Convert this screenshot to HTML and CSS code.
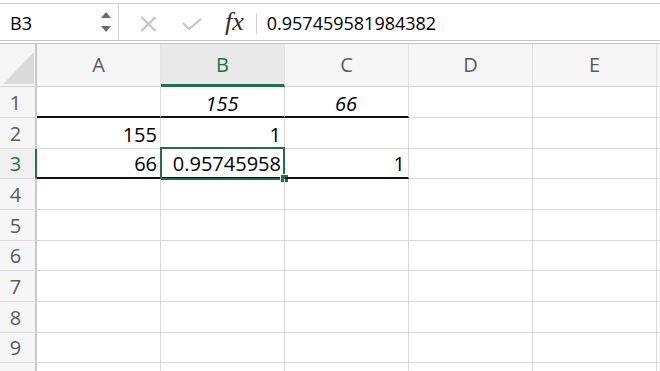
FILE: index.html
```html
<!DOCTYPE html>
<html>
<head>
<meta charset="utf-8">
<link rel="stylesheet" href="styles.css">
</head>
<body>
<div class="app">
  <div class="formula-bar">
    <div class="name-box">
      <span class="name">B3</span>
      <svg class="spinner" width="10" height="21" viewBox="0 0 10 21">
        <path d="M5 0 L10 6 L0 6 Z" fill="#6b6b6b"/>
        <path d="M0 14 L10 14 L5 20 Z" fill="#6b6b6b"/>
      </svg>
    </div>
    <svg class="cancel" width="17" height="16" viewBox="0 0 17 16">
      <path d="M1.5 1 L15.5 15 M15.5 1 L1.5 15" stroke="#c4c4c4" stroke-width="2.2" fill="none"/>
    </svg>
    <svg class="enter" width="20" height="12" viewBox="0 0 20 12">
      <path d="M1 5 L7 11 L19 1" stroke="#c4c4c4" stroke-width="2.2" fill="none"/>
    </svg>
    <span class="fx">fx</span>
    <div class="sep"></div>
    <div class="formula">0.957459581984382</div>
  </div>

  <div class="sheet">
    <div class="corner">
      <svg width="31" height="32" viewBox="0 0 31 32"><path d="M0 32 L31 0 L31 32 Z" fill="#dadada"/></svg>
    </div>
    <div class="ch">A</div>
    <div class="ch ch-sel">B</div>
    <div class="ch">C</div>
    <div class="ch">D</div>
    <div class="ch">E</div>
    <div class="ch ch-rest"></div>

    <div class="rh">1</div>
    <div class="c thick"></div>
    <div class="c thick center it">155</div>
    <div class="c thick center it">66</div>
    <div class="c"></div>
    <div class="c"></div>
    <div class="c rest"></div>

    <div class="rh">2</div>
    <div class="c">155</div>
    <div class="c">1</div>
    <div class="c"></div>
    <div class="c"></div>
    <div class="c"></div>
    <div class="c rest"></div>

    <div class="rh rh-sel">3</div>
    <div class="c thick">66</div>
    <div class="c thick sel">0.95745958<span class="sel-box"></span><span class="handle"></span></div>
    <div class="c thick">1</div>
    <div class="c"></div>
    <div class="c"></div>
    <div class="c rest"></div>

    <div class="rh">4</div><div class="c"></div><div class="c"></div><div class="c"></div><div class="c"></div><div class="c"></div><div class="c rest"></div>
    <div class="rh">5</div><div class="c"></div><div class="c"></div><div class="c"></div><div class="c"></div><div class="c"></div><div class="c rest"></div>
    <div class="rh">6</div><div class="c"></div><div class="c"></div><div class="c"></div><div class="c"></div><div class="c"></div><div class="c rest"></div>
    <div class="rh">7</div><div class="c"></div><div class="c"></div><div class="c"></div><div class="c"></div><div class="c"></div><div class="c rest"></div>
    <div class="rh">8</div><div class="c"></div><div class="c"></div><div class="c"></div><div class="c"></div><div class="c"></div><div class="c rest"></div>
    <div class="rh">9</div><div class="c"></div><div class="c"></div><div class="c"></div><div class="c"></div><div class="c"></div><div class="c rest"></div>
    <div class="rh"></div><div class="c"></div><div class="c"></div><div class="c"></div><div class="c"></div><div class="c"></div><div class="c rest"></div>
  </div>
</div>
</body>
</html>
```

FILE: styles.css
```css
html, body {
  margin: 0;
  padding: 0;
  background: #ffffff;
}
body {
  width: 660px;
  height: 371px;
  overflow: hidden;
  font-family: "Open Sans", "Liberation Sans", sans-serif;
  color: #000;
}
.app {
  padding-top: 3px;
}
.formula-bar {
  display: flex;
  align-items: center;
  border-top: 1px solid #cfcfcf;
  border-bottom: 1px solid #c4c4c4;
  box-sizing: border-box;
  height: 38px;
}
.name-box {
  width: 119px;
  height: 100%;
  box-sizing: border-box;
  border-right: 1px solid #cdcdcd;
  display: flex;
  align-items: center;
  justify-content: space-between;
  padding-left: 10px;
  padding-right: 7px;
}
.name {
  font-size: 18px;
  line-height: 24px;
  padding-top: 2px;
}
.spinner {
  display: block;
  margin-top: 1px;
}
.cancel {
  margin-left: 21px;
  margin-top: 3px;
  display: block;
}
.enter {
  margin-left: 25px;
  margin-top: 3px;
  display: block;
}
.fx {
  margin-left: 23px;
  font-family: "Liberation Serif", "DejaVu Serif", serif;
  font-style: italic;
  font-size: 26px;
  line-height: 26px;
  color: #2e2e2e;
  padding-bottom: 1px;
}
.sep {
  width: 1px;
  height: 21px;
  background: #d2d2d2;
  margin-left: 12px;
  margin-top: 2px;
}
.formula {
  margin-left: 10px;
  font-size: 18px;
  line-height: 24px;
  padding-top: 2px;
}

.sheet {
  margin-top: 2px;
  border-top: 1px solid #c6c6c6;
  display: grid;
  grid-template-columns: 37px repeat(5, 124px) 1fr;
  grid-template-rows: 43px 31px 31px 30px 31px 31px 30px 31px 31px 30px 31px;
  height: 328px;
  overflow: hidden;
}
.corner {
  background: #f6f6f6;
  border-right: 2px solid #c9c9c9;
  border-bottom: 1px solid #d4d4d4;
  box-sizing: border-box;
  display: flex;
  align-items: flex-end;
  justify-content: flex-end;
  padding: 0 1px 2px 0;
}
.corner svg {
  display: block;
}
.ch {
  background: #f6f6f6;
  border-right: 1px solid #e2e2e2;
  border-bottom: 1px solid #d4d4d4;
  box-sizing: border-box;
  display: flex;
  align-items: center;
  justify-content: center;
  font-size: 20px;
  color: #5a5a5a;
  padding-bottom: 1px;
}
.ch-sel {
  background: #e9e9e9;
  color: #1f7145;
  border-bottom: 3px solid #1f7145;
  padding-top: 2px;
}
.ch-rest {
  border-right: none;
}
.rh {
  background: #f6f6f6;
  border-right: 2px solid #c9c9c9;
  border-bottom: 1px solid #dcdcdc;
  box-sizing: border-box;
  display: flex;
  align-items: flex-end;
  justify-content: center;
  font-size: 20px;
  line-height: 24px;
  color: #5a5a5a;
  padding-bottom: 2px;
  padding-right: 4px;
}
.rh-sel {
  color: #1f7145;
  border-right-color: #1f7145;
  background: #f0f0f0;
}
.c {
  position: relative;
  border-right: 1px solid #d9d9d9;
  border-bottom: 1px solid #d9d9d9;
  box-sizing: border-box;
  display: flex;
  align-items: flex-end;
  justify-content: flex-end;
  font-size: 20px;
  line-height: 24px;
  padding: 0 3px 1px 3px;
  white-space: nowrap;
}
.c.rest {
  border-right: none;
}
.c.thick {
  border-bottom: 2px solid #111;
}
.c.center {
  justify-content: center;
  padding-right: 4px;
}
.c.it {
  font-style: italic;
  padding-bottom: 0;
}
.sel-box {
  position: absolute;
  left: -1px;
  top: -2px;
  width: 125px;
  height: 33px;
  box-sizing: border-box;
  border: 2px solid #1f7145;
}
.handle {
  position: absolute;
  right: -4px;
  bottom: -5px;
  width: 7px;
  height: 7px;
  background: #1f7145;
  outline: 1px solid #fff;
}
```
